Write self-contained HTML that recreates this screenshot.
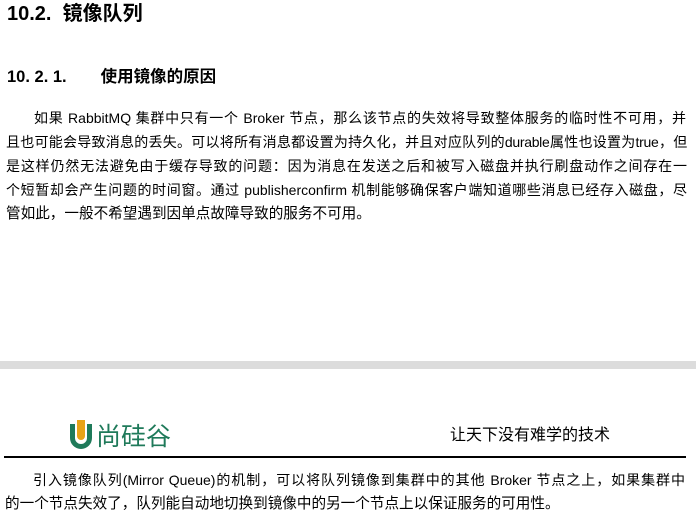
<!DOCTYPE html>
<html><head><meta charset="utf-8"><style>
body{margin:0;width:696px;height:524px;background:#fff;position:relative;overflow:hidden;font-family:"Liberation Sans","Noto Sans CJK SC",sans-serif;color:#000}
.l{position:absolute;font-size:14px;line-height:20px;white-space:nowrap;text-align:justify;text-align-last:justify}
.h1{position:absolute;left:7px;top:2px;font-size:20px;font-weight:bold;line-height:24px}
.h2{position:absolute;left:7px;top:66px;font-size:16.5px;font-weight:bold;line-height:22px}
</style></head><body>
<div class="h1">10.2.&nbsp; 镜像队列</div>
<div class="h2">10. 2. 1.<span style="display:inline-block;width:34px"></span>使用镜像的原因</div>
<div class="l" style="left:34px;width:652px;top:108px">如果 RabbitMQ 集群中只有一个 Broker 节点，那么该节点的失效将导致整体服务的临时性不可用，并</div>
<div class="l" style="left:6px;width:681px;top:132px;letter-spacing:-0.3px">且也可能会导致消息的丢失。可以将所有消息都设置为持久化，并且对应队列的durable属性也设置为true，但</div>
<div class="l" style="left:6px;width:681px;top:156px">是这样仍然无法避免由于缓存导致的问题：因为消息在发送之后和被写入磁盘并执行刷盘动作之间存在一</div>
<div class="l" style="left:6px;width:681px;top:180px">个短暂却会产生问题的时间窗。通过 publisherconfirm 机制能够确保客户端知道哪些消息已经存入磁盘，尽</div>
<div class="l" style="left:6px;top:204px;text-align:left;text-align-last:left;font-size:14.6px">管如此，一般不希望遇到因单点故障导致的服务不可用。</div>
<div style="position:absolute;left:0;top:361px;width:696px;height:8px;background:#dcdcdc"></div>
<svg style="position:absolute;left:66px;top:416px" width="30" height="38" viewBox="0 0 30 38">
<path d="M4 8 V22 A11 11 0 0 0 26 22 V8 H21 V22 A6 6 0 0 1 9 22 V8 Z" fill="#1f7a5a"/>
<path d="M11 4 V20 A4 4 0 0 0 19 20 V4 Z" fill="#e8a317"/>
</svg>
<div style="position:absolute;left:96px;top:420px;font-size:25px;line-height:30px;color:#1f7a5a;font-family:'Noto Sans CJK SC',sans-serif">尚硅谷</div>
<div style="position:absolute;left:450px;top:425px;font-size:16px;line-height:22px">让天下没有难学的技术</div>
<div style="position:absolute;left:4px;top:456px;width:682px;height:1.5px;background:#000"></div>
<div class="l" style="left:33px;width:652px;top:470px">引入镜像队列(Mirror Queue)的机制，可以将队列镜像到集群中的其他 Broker 节点之上，如果集群中</div>
<div class="l" style="left:5px;top:494px;text-align:left;text-align-last:left;font-size:14.6px">的一个节点失效了，队列能自动地切换到镜像中的另一个节点上以保证服务的可用性。</div>
</body></html>
